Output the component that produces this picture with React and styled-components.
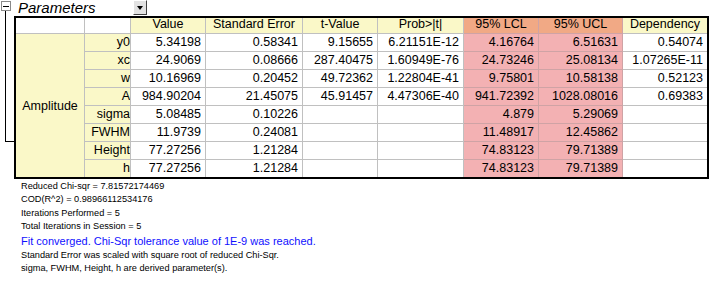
import React from "react";
import styled, { createGlobalStyle, css } from "styled-components";

const GlobalStyle = createGlobalStyle`
  html, body { margin: 0; padding: 0; background: #ffffff; }
  body { font-family: "Liberation Sans", Arial, sans-serif; color: #000; }
`;

const YELLOW = "#faf8c8";
const PINK = "#f3b1b3";
const SALMON = "#f1a985";
const GRID = "#c0c0c0";
const PINK_GRID = "#cfa3a5";

const Page = styled.div`
  display: flex;
  width: 716px;
  height: 282px;
  overflow: hidden;
`;

const Gutter = styled.div`
  width: 14px;
  flex: none;
  display: flex;
  flex-direction: column;
`;

const CollapseBox = styled.div`
  box-sizing: border-box;
  width: 10px;
  height: 10px;
  margin: 1px 0 0 1px;
  border: 1px solid #8a8a8a;
  background: #fff;
  display: flex;
  align-items: center;
  justify-content: center;
  &::before {
    content: "";
    width: 6px;
    height: 1px;
    background: #000;
  }
`;

const Connector = styled.div`
  box-sizing: border-box;
  margin-left: 5px;
  width: 9px;
  height: 131px;
  border-left: 1px solid #000;
  border-bottom: 1px solid #000;
`;

const Main = styled.div`
  display: flex;
  flex-direction: column;
`;

const TitleRow = styled.div`
  display: flex;
  align-items: flex-start;
  height: 16px;
`;

const Title = styled.div`
  box-sizing: border-box;
  width: 119px;
  padding-left: 4px;
  font-style: italic;
  font-size: 15px;
  line-height: 15px;
  color: #000;
`;

const DropButton = styled.div`
  box-sizing: border-box;
  width: 14px;
  height: 15px;
  background: #e2e2e2;
  border: 1px solid;
  border-color: #ffffff #404040 #404040 #ffffff;
  display: flex;
  align-items: center;
  justify-content: center;
  &::before {
    content: "";
    width: 0;
    height: 0;
    border-left: 3.5px solid transparent;
    border-right: 3.5px solid transparent;
    border-top: 4px solid #000;
  }
`;

const Grid = styled.div`
  display: grid;
  grid-template-columns: 69px 46px 75px 97px 75px 86px 75px 84px 84px;
  grid-template-rows: 16px repeat(7, 18px) 17px;
  border: 2px solid #000;
  width: max-content;
  font-size: 12.5px;
`;

const Cell = styled.div`
  box-sizing: border-box;
  overflow: hidden;
  white-space: nowrap;
  background: ${(p) => p.$bg || "#fff"};
  border-right: ${(p) => (p.$lastCol ? "none" : `1px solid ${p.$line || GRID}`)};
  border-bottom: ${(p) => (p.$lastRow ? "none" : `1px solid ${p.$line || GRID}`)};
  text-align: ${(p) => p.$align || "right"};
  padding-right: ${(p) => (p.$align === "center" ? "0" : p.$pad ?? "4px")};
  line-height: 16px;
  ${(p) =>
    p.$header &&
    css`
      line-height: 12px;
    `}
`;

const GroupCell = styled(Cell)`
  grid-column: 1;
  grid-row: 2 / span 8;
  display: flex;
  align-items: center;
  justify-content: center;
  padding-right: 0;
`;

const Notes = styled.div`
  padding: 1px 0 0 7px;
  font-size: 9.2px;
  color: #000;
`;

const NoteLine = styled.div`
  line-height: 13.4px;
  white-space: nowrap;
  ${(p) =>
    p.$blue &&
    css`
      color: #1010ff;
      font-size: 11px;
      line-height: 15px;
    `}
`;

const headers = [
  { t: "Value", bg: YELLOW },
  { t: "Standard Error", bg: YELLOW },
  { t: "t-Value", bg: YELLOW },
  { t: "Prob>|t|", bg: YELLOW },
  { t: "95% LCL", bg: SALMON, line: PINK_GRID },
  { t: "95% UCL", bg: SALMON, line: PINK_GRID },
  { t: "Dependency", bg: YELLOW },
];

const rows = [
  ["y0", "5.34198", "0.58341", "9.15655", "6.21151E-12", "4.16764", "6.51631", "0.54074"],
  ["xc", "24.9069", "0.08666", "287.40475", "1.60949E-76", "24.73246", "25.08134", "1.07265E-11"],
  ["w", "10.16969", "0.20452", "49.72362", "1.22804E-41", "9.75801", "10.58138", "0.52123"],
  ["A", "984.90204", "21.45075", "45.91457", "4.47306E-40", "941.72392", "1028.08016", "0.69383"],
  ["sigma", "5.08485", "0.10226", "", "", "4.879", "5.29069", ""],
  ["FWHM", "11.9739", "0.24081", "", "", "11.48917", "12.45862", ""],
  ["Height", "77.27256", "1.21284", "", "", "74.83123", "79.71389", ""],
  ["h", "77.27256", "1.21284", "", "", "74.83123", "79.71389", ""],
];

const notes = [
  { t: "Reduced Chi-sqr = 7.81572174469" },
  { t: "COD(R^2) = 0.98966112534176" },
  { t: "Iterations Performed = 5" },
  { t: "Total Iterations in Session = 5" },
  { t: "Fit converged. Chi-Sqr tolerance value of 1E-9 was reached.", blue: true },
  { t: "Standard Error was scaled with square root of reduced Chi-Sqr." },
  { t: "sigma, FWHM, Height, h are derived parameter(s)." },
];

export default function App() {
  return (
    <>
      <GlobalStyle />
      <Page>
        <Gutter>
          <CollapseBox />
          <Connector />
        </Gutter>
        <Main>
          <TitleRow>
            <Title>Parameters</Title>
            <DropButton />
          </TitleRow>
          <Grid>
            <Cell $header $align="center" />
            <Cell $header $align="center" />
            {headers.map((h, i) => (
              <Cell
                key={h.t}
                $header
                $align="center"
                $bg={h.bg}
                $line={h.line}
                $lastCol={i === headers.length - 1}
              >
                {h.t}
              </Cell>
            ))}
            <GroupCell $bg={YELLOW} $lastRow>
              Amplitude
            </GroupCell>
            {rows.map((r, ri) => {
              const lastRow = ri === rows.length - 1;
              return (
                <React.Fragment key={r[0]}>
                  <Cell $bg={YELLOW} $pad="0" $lastRow={lastRow}>
                    {r[0]}
                  </Cell>
                  {r.slice(1).map((v, ci) => {
                    const pink = ci === 4 || ci === 5;
                    return (
                      <Cell
                        key={ci}
                        $bg={pink ? PINK : "#fff"}
                        $line={pink ? PINK_GRID : GRID}
                        $lastRow={lastRow}
                        $lastCol={ci === 6}
                      >
                        {v}
                      </Cell>
                    );
                  })}
                </React.Fragment>
              );
            })}
          </Grid>
          <Notes>
            {notes.map((n) => (
              <NoteLine key={n.t} $blue={n.blue}>
                {n.t}
              </NoteLine>
            ))}
          </Notes>
        </Main>
      </Page>
    </>
  );
}
